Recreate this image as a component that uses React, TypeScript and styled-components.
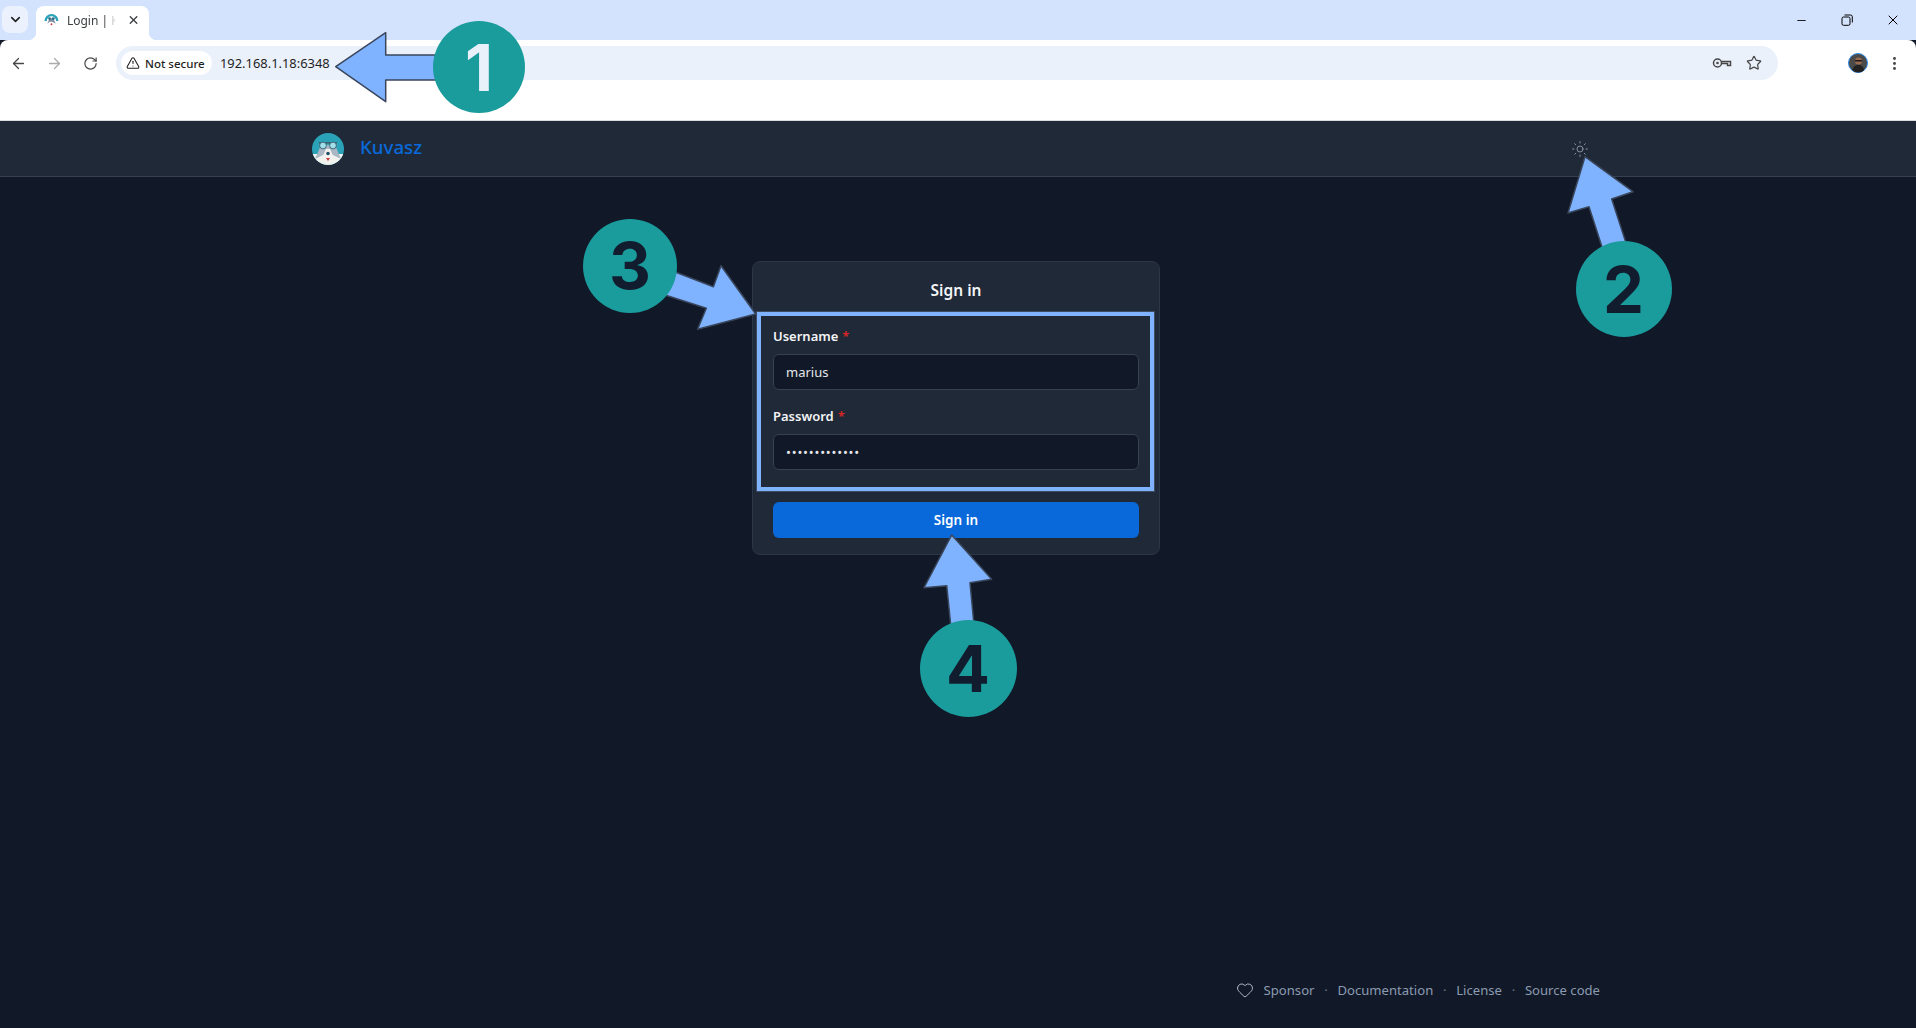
import React from 'react';
import styled, { createGlobalStyle } from 'styled-components';
import { ArrowLeft, ArrowRight, RotateCw, X, Minus, ChevronDown, TriangleAlert, Star, EllipsisVertical, Heart, Sun } from 'lucide-react';

const Global = createGlobalStyle`
  html, body { margin: 0; padding: 0; height: 100%; background: #111827; overflow: hidden; }
  #root { height: 100%; }
  * { box-sizing: border-box; }
`;
const FONT = `"Noto Sans", "Open Sans", Arial, sans-serif`;

const Page = styled.div`
  position: relative; width: 100%; height: 100vh; display: flex; flex-direction: column;
  font-family: ${FONT}; background: #111827; overflow: hidden;
`;
const TabStrip = styled.div`
  height: 40px; flex: none; background: #d3e3fd; display: flex; align-items: flex-start;
`;
const TabMenu = styled.div`
  width: 26px; height: 27px; margin: 6px 0 0 2px; border-radius: 8px; background: #ecf2fd;
  display: flex; align-items: center; justify-content: center; color: #1f1f1f;
`;
const Tab = styled.div`
  position: relative; width: 113px; height: 34px; margin: 6px 0 0 8px; background: #fff;
  border-radius: 8px 8px 0 0; display: flex; align-items: center; padding: 0 9px 6px 8px;
  &::before, &::after { content: ''; position: absolute; bottom: 0; width: 8px; height: 8px; }
  &::before { left: -8px; background: radial-gradient(circle at 0 0, transparent 8px, #fff 8.5px); }
  &::after { right: -8px; background: radial-gradient(circle at 100% 0, transparent 8px, #fff 8.5px); }
`;
const TabTitle = styled.span`
  flex: none; margin: 0 11px 0 8px; width: 49px; overflow: hidden; white-space: nowrap; font-size: 12px; color: #3c4043;
  mask-image: linear-gradient(to right, #000 78%, transparent 100%);
`;
const Spacer = styled.div`flex: 1;`;
const WindowButton = styled.div`
  width: 46px; height: 40px; display: flex; align-items: center; justify-content: center; color: #000;
`;
const Toolbar = styled.div`
  height: 81px; flex: none; background: #fff; border-bottom: 1px solid #dcdcdc; border-radius: 8px 8px 0 0;
  display: flex; align-items: flex-start; padding: 6px 8px 0 4px;
`;
const NavButton = styled.div<{ $dim?: boolean }>`
  width: 28px; height: 34px; margin-right: 8px; display: flex; align-items: center; justify-content: center;
  color: ${p => (p.$dim ? '#a9abad' : '#474747')};
`;
const Omnibox = styled.div`
  flex: 1; height: 34px; margin: 0 70px 0 4px; background: #ebf1fb; border-radius: 17px;
  display: flex; align-items: center; padding: 0 14px 0 5px;
`;
const SecurityChip = styled.div`
  width: 91px; height: 24px; border-radius: 12px; background: #fff; display: flex; align-items: center; gap: 5px;
  padding-left: 5px; font-size: 11.5px; font-weight: 500; color: #1f1f1f; white-space: nowrap;
`;
const Url = styled.span`
  margin-left: 8px; font-size: 12.9px; color: #1f1f1f;
`;
const OmniIcons = styled.div`
  margin-left: auto; display: flex; gap: 12px; color: #474747;
`;
const OmniIcon = styled.div`
  width: 20px; height: 20px; display: flex; align-items: center; justify-content: center;
`;
const Avatar = styled.div`
  width: 20px; height: 34px; display: flex; align-items: center;
`;
const Kebab = styled.div`
  width: 28px; height: 34px; margin-left: 12px; display: flex; align-items: center; justify-content: center; color: #474747;
`;
const TopNav = styled.header`
  height: 56px; flex: none; background: #1f2937; border-bottom: 1px solid #374151; padding-right: 4px;
`;
const Container = styled.div`
  width: 1288px; height: 100%; margin: 0 auto; display: flex; align-items: center;
`;
const Brand = styled.a`
  display: flex; align-items: center; gap: 16px; font-size: 18.7px; font-weight: 500; color: #0969da; text-decoration: none;
`;
const BrandName = styled.span`
  margin-top: -4px;
`;
const ThemeToggle = styled.div`
  margin-left: auto; width: 40px; height: 40px; display: flex; align-items: center; justify-content: center; color: #9ca3af;
`;
const Main = styled.main`
  flex: 1; display: flex; flex-direction: column; align-items: center; padding: 84px 4px 0 0; min-height: 0;
`;
const Card = styled.form`
  width: 408px; background: #1f2937; border: 1px solid #2b3646; border-radius: 8px; padding: 18px 20px 16px;
  display: flex; flex-direction: column;
`;
const CardTitle = styled.h1`
  margin: 0 0 26px; height: 20px; font-size: 15.5px; line-height: 20px; font-weight: 600; color: #f3f4f6; text-align: center;
`;
const Field = styled.div`
  display: flex; flex-direction: column; gap: 8px; margin-bottom: 16px;
`;
const Label = styled.label`
  height: 20px; font-size: 13px; line-height: 20px; font-weight: 600; color: #f3f4f6;
`;
const Required = styled.span`
  color: #dc2626; margin-left: 4px;
`;
const Input = styled.input`
  width: 100%; height: 36px; background: #111827; border: 1px solid #374151; border-radius: 6px; padding: 0 12px;
  color: #e5e7eb; font: 13px ${FONT}; outline: none;
`;
const PasswordInput = styled(Input)`
  letter-spacing: 0.8px;
`;
const SubmitButton = styled.button`
  margin-top: 16px; height: 36px; border: 0; border-radius: 6px; background: #0969da; color: #fff;
  font: 600 13.5px ${FONT};
`;
const Footer = styled.footer`
  margin-top: auto; width: 1288px; height: 38px; margin-bottom: 19px; display: flex; justify-content: flex-end; align-items: center;
  font-size: 13.1px; color: #8b9bb0;
`;
const FooterHeart = styled.span`
  display: flex; margin-right: 10px; color: #b4bcc8;
`;
const FooterDot = styled.span`
  width: 23px; text-align: center; color: #6b7280;
`;
const FooterLink = styled.a`
  white-space: nowrap;
`;
const ArrowLayer = styled.svg`
  position: absolute; left: 0; top: 0; width: 100%; height: 100%; pointer-events: none;
`;
const Highlight = styled.div`
  position: absolute; left: 757px; top: 312px; width: 397px; height: 179px; border: 4px solid #7fb2ff; outline: 1px solid #3d4b63;
  pointer-events: none;
`;
const Badge = styled.div<{ $x: number; $y: number; $d: number; $light?: boolean }>`
  position: absolute; left: ${p => p.$x - p.$d / 2}px; top: ${p => p.$y - p.$d / 2}px; width: ${p => p.$d}px; height: ${p => p.$d}px;
  border-radius: 50%; background: #1a9b9c; display: flex; align-items: center; justify-content: center;
  font-family: Inter, "Noto Sans", sans-serif; font-weight: 700; font-size: 65px; line-height: 1;
  color: ${p => (p.$light ? '#e8f0fa' : '#111c2e')};
`;

const Logo = ({ size }: { size: number }) => (
  <svg width={size} height={size} viewBox="0 0 32 32">
    <defs><clipPath id="lc"><circle cx="16" cy="16" r="16" /></clipPath></defs>
    <g clipPath="url(#lc)">
      <rect width="32" height="32" fill="#2aa3b8" />
      <rect y="21" width="32" height="11" fill="#f1f1ee" />
      <path d="M3 26 L9 12 L23 12 L29 26 L19 21 L13 21Z" fill="#a9b6c4" />
      <path d="M7 9 h18 v1.600 h-18z" fill="#3c5a6c" />
      <circle cx="11" cy="12.500" r="3.400" fill="#9fe0ea" stroke="#3c5a6c" strokeWidth="0.900" />
      <circle cx="21" cy="12.500" r="3.400" fill="#9fe0ea" stroke="#3c5a6c" strokeWidth="0.900" />
      <path d="M9 27 L14 16 L18 16 L23 27Z" fill="#f1f1ee" />
      <circle cx="16" cy="20.500" r="1.800" fill="#25506a" />
      <path d="M14 25 h4 l-2 3z" fill="#d13a3a" />
    </g>
  </svg>
);
const Favicon = () => (
  <svg width="16" height="16" viewBox="0 0 16 16">
    <path d="M0.500 9 A7.500 7.500 0 0 1 15.500 9 L13 9 A5 5 0 0 0 3 9Z" fill="#2aa3b8" />
    <path d="M3.500 12 L6 6 h4 l2.500 6 -3.500-2 h-3z" fill="#7d8da0" />
    <circle cx="6" cy="6.500" r="1.500" fill="#2f6f86" />
    <circle cx="10" cy="6.500" r="1.500" fill="#2f6f86" />
    <circle cx="8" cy="12.500" r="1" fill="#d13a3a" />
  </svg>
);
const KeyIcon = () => (
  <svg width="20" height="14" viewBox="0 0 20 14" fill="none" stroke="currentColor" strokeWidth="1.500">
    <circle cx="5.500" cy="7" r="4" />
    <circle cx="5.500" cy="7" r="1.300" fill="currentColor" stroke="none" />
    <path d="M9.500 5.500 H18.500 V9.500 H15.500 V7.500 H9.500" />
  </svg>
);
const RestoreIcon = () => (
  <svg width="12" height="12" viewBox="0 0 12 12" fill="none" stroke="currentColor" strokeWidth="1">
    <rect x="1" y="3" width="8" height="8.300" rx="1.500" />
    <path d="M3.500 1 H9.500 A1.800 1.800 0 0 1 11.300 2.800 V8.500" />
  </svg>
);
const AvatarImg = () => (
  <svg width="20" height="20" viewBox="0 0 20 20">
    <circle cx="10" cy="10" r="9.500" fill="#4a4a48" stroke="#2f8be6" strokeWidth="1" />
    <circle cx="10.500" cy="8" r="3.600" fill="#9a6a50" />
    <path d="M7 7 h7 v1.500 h-7z" fill="#1b1b1b" />
    <path d="M4.500 17.500 C5 13 8 12 10.500 12 S15.500 13 16 17.500 A9 9 0 0 1 4.500 17.500Z" fill="#222" />
  </svg>
);

const arrows = [
  '335.700,66.700 385.700,32.700 385.700,55 440,55 440,80 385.700,80 385.700,101.700',
  '1585,156.700 1633,191.700 1611.700,199 1626.700,245 1603,250 1589,206.700 1568,213',
  '755.700,314 721,265.700 713.400,286.700 670,270 665,295 706.300,308.300 697.600,329.300',
  '951.700,535 991.700,579.300 970,582.700 974,625 950.700,625 946.700,585.700 924,587.700',
];

export default function App() {
  return (
    <Page>
      <Global />
      <TabStrip>
        <TabMenu><ChevronDown size={15} strokeWidth={2.5} /></TabMenu>
        <Tab>
          <Favicon />
          <TabTitle>Login | Kuvasz</TabTitle>
          <X size={14} strokeWidth={2.4} color="#3c4043" />
        </Tab>
        <Spacer />
        <WindowButton><Minus size={13} strokeWidth={1.6} /></WindowButton>
        <WindowButton><RestoreIcon /></WindowButton>
        <WindowButton><X size={16} strokeWidth={1.5} /></WindowButton>
      </TabStrip>
      <Toolbar>
        <NavButton><ArrowLeft size={17} strokeWidth={1.8} /></NavButton>
        <NavButton $dim><ArrowRight size={17} strokeWidth={1.8} /></NavButton>
        <NavButton><RotateCw size={15} strokeWidth={1.9} /></NavButton>
        <Omnibox>
          <SecurityChip><TriangleAlert size={14} strokeWidth={1.8} />Not secure</SecurityChip>
          <Url>192.168.1.18:6348</Url>
          <OmniIcons>
            <OmniIcon><KeyIcon /></OmniIcon>
            <OmniIcon><Star size={16} strokeWidth={1.8} /></OmniIcon>
          </OmniIcons>
        </Omnibox>
        <Avatar><AvatarImg /></Avatar>
        <Kebab><EllipsisVertical size={17} strokeWidth={2.2} /></Kebab>
      </Toolbar>
      <TopNav>
        <Container>
          <Brand><Logo size={32} /><BrandName>Kuvasz</BrandName></Brand>
          <ThemeToggle><Sun size={18} strokeWidth={1.1} /></ThemeToggle>
        </Container>
      </TopNav>
      <Main>
        <Card onSubmit={e => e.preventDefault()}>
          <CardTitle>Sign in</CardTitle>
          <Field>
            <Label>Username<Required>*</Required></Label>
            <Input type="text" value="marius" readOnly />
          </Field>
          <Field>
            <Label>Password<Required>*</Required></Label>
            <PasswordInput type="password" value="kuvaszpasswor" readOnly />
          </Field>
          <SubmitButton type="submit">Sign in</SubmitButton>
        </Card>
        <Footer>
          <FooterHeart><Heart size={18} strokeWidth={1.3} /></FooterHeart>
          <FooterLink>Sponsor</FooterLink>
          <FooterDot>·</FooterDot>
          <FooterLink>Documentation</FooterLink>
          <FooterDot>·</FooterDot>
          <FooterLink>License</FooterLink>
          <FooterDot>·</FooterDot>
          <FooterLink>Source code</FooterLink>
        </Footer>
      </Main>
      <Highlight />
      <ArrowLayer viewBox="0 0 1916 1028">
        {arrows.map(points => (
          <polygon key={points} points={points} fill="#7fb2ff" stroke="#39465c" strokeWidth="1.500" strokeLinejoin="round" />
        ))}
      </ArrowLayer>
      <Badge $x={479} $y={67} $d={92} $light>1</Badge>
      <Badge $x={1623.500} $y={289} $d={96}>2</Badge>
      <Badge $x={630} $y={265.500} $d={94}>3</Badge>
      <Badge $x={968} $y={668.500} $d={97}>4</Badge>
    </Page>
  );
}
